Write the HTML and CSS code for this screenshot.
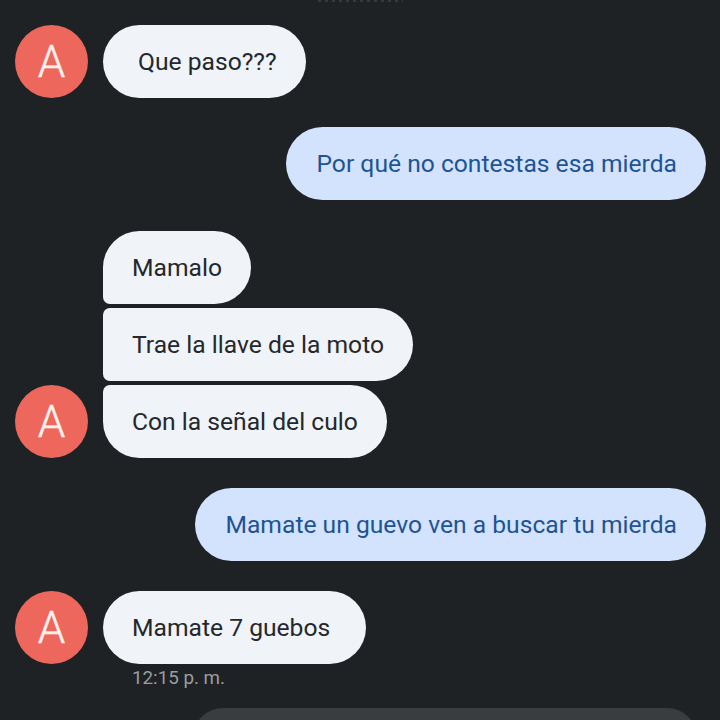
FILE: index.html
```html
<!DOCTYPE html>
<html lang="es">
<head>
    <meta charset="UTF-8" />
    <meta name="viewport" content="width=device-width, initial-scale=1" />
    <title>Mensajes</title>
    <link rel="stylesheet" href="styles.css">
</head>
<body>
    <main class="thread">
        <div class="top-edge"><div class="top-specks"></div></div>

        <div class="row row-first">
            <div class="avatar">A</div>
            <div class="bubble bubble-in pad-left">Que paso???</div>
        </div>

        <div class="row row-out">
            <div class="bubble bubble-out">Por qué no contestas esa mierda</div>
        </div>

        <div class="row row-group">
            <div class="avatar">A</div>
            <div class="group">
                <div class="bubble bubble-in group-top">Mamalo</div>
                <div class="bubble bubble-in group-mid">Trae la llave de la moto</div>
                <div class="bubble bubble-in group-end">Con la señal del culo</div>
            </div>
        </div>

        <div class="row row-out row-next">
            <div class="bubble bubble-out">Mamate un guevo ven a buscar tu mierda</div>
        </div>

        <div class="row row-next">
            <div class="avatar">A</div>
            <div class="bubble bubble-in pad-right">Mamate 7 guebos</div>
        </div>
        <div class="timestamp">12:15 p. m.</div>

        <div class="compose"></div>
    </main>
</body>
</html>
```

FILE: styles.css
```css
* {
    margin: 0;
    padding: 0;
    box-sizing: border-box;
}

body {
    font-family: Roboto, "Liberation Sans", sans-serif;
    background-color: #1f2225;
    height: 720px;
    overflow: hidden;
}

.thread {
    display: flex;
    flex-direction: column;
    padding: 0 14px 0 15px;
    height: 720px;
    overflow: hidden;
}

.thread > * {
    flex: none;
}

/* Faint remains of a line cut off by the top of the picture */
.top-edge {
    height: 3px;
    display: flex;
    justify-content: center;
}

.top-specks {
    width: 85px;
    height: 2px;
    background-image: repeating-linear-gradient(90deg, #36393c 0 3px, transparent 3px 7px);
}

.row {
    display: flex;
    align-items: flex-end;
    gap: 15px;
    margin-top: 29px;
}

.row-first {
    margin-top: 22px;
}

.row-group {
    margin-top: 31px;
}

.row-next {
    margin-top: 30px;
}

.row-out {
    justify-content: flex-end;
}

.avatar {
    width: 73px;
    height: 73px;
    flex: none;
    display: flex;
    align-items: center;
    justify-content: center;
    border-radius: 50%;
    background-color: #ee675c;
    color: #fdf1ee;
    font-size: 44px;
    font-weight: 300;
    -webkit-text-stroke: 0.4px #fdf1ee;
}

.group {
    display: flex;
    flex-direction: column;
    align-items: flex-start;
    gap: 4px;
}

.bubble {
    height: 73px;
    display: flex;
    align-items: center;
    border-radius: 37px;
    font-size: 24.65px;
    white-space: nowrap;
}

.bubble-in {
    padding: 0 29px;
    background-color: #f0f3f7;
    color: #25282b;
}

.bubble-out {
    padding: 0 29px 0 30px;
    background-color: #d3e3fd;
    color: #1f5394;
}

.pad-left {
    padding-left: 35px;
}

.pad-right {
    padding-right: 36px;
}

.group-top {
    border-bottom-left-radius: 7px;
}

.group-mid {
    border-top-left-radius: 7px;
    border-bottom-left-radius: 7px;
}

.group-end {
    border-top-left-radius: 7px;
}

.timestamp {
    margin: 3px 0 0 117px;
    color: #9a9da0;
    font-size: 18.8px;
    line-height: 22px;
}

.compose {
    height: 60px;
    margin: 19px 9px 0 178px;
    border-radius: 30px;
    background-color: #3a3d40;
}
```
